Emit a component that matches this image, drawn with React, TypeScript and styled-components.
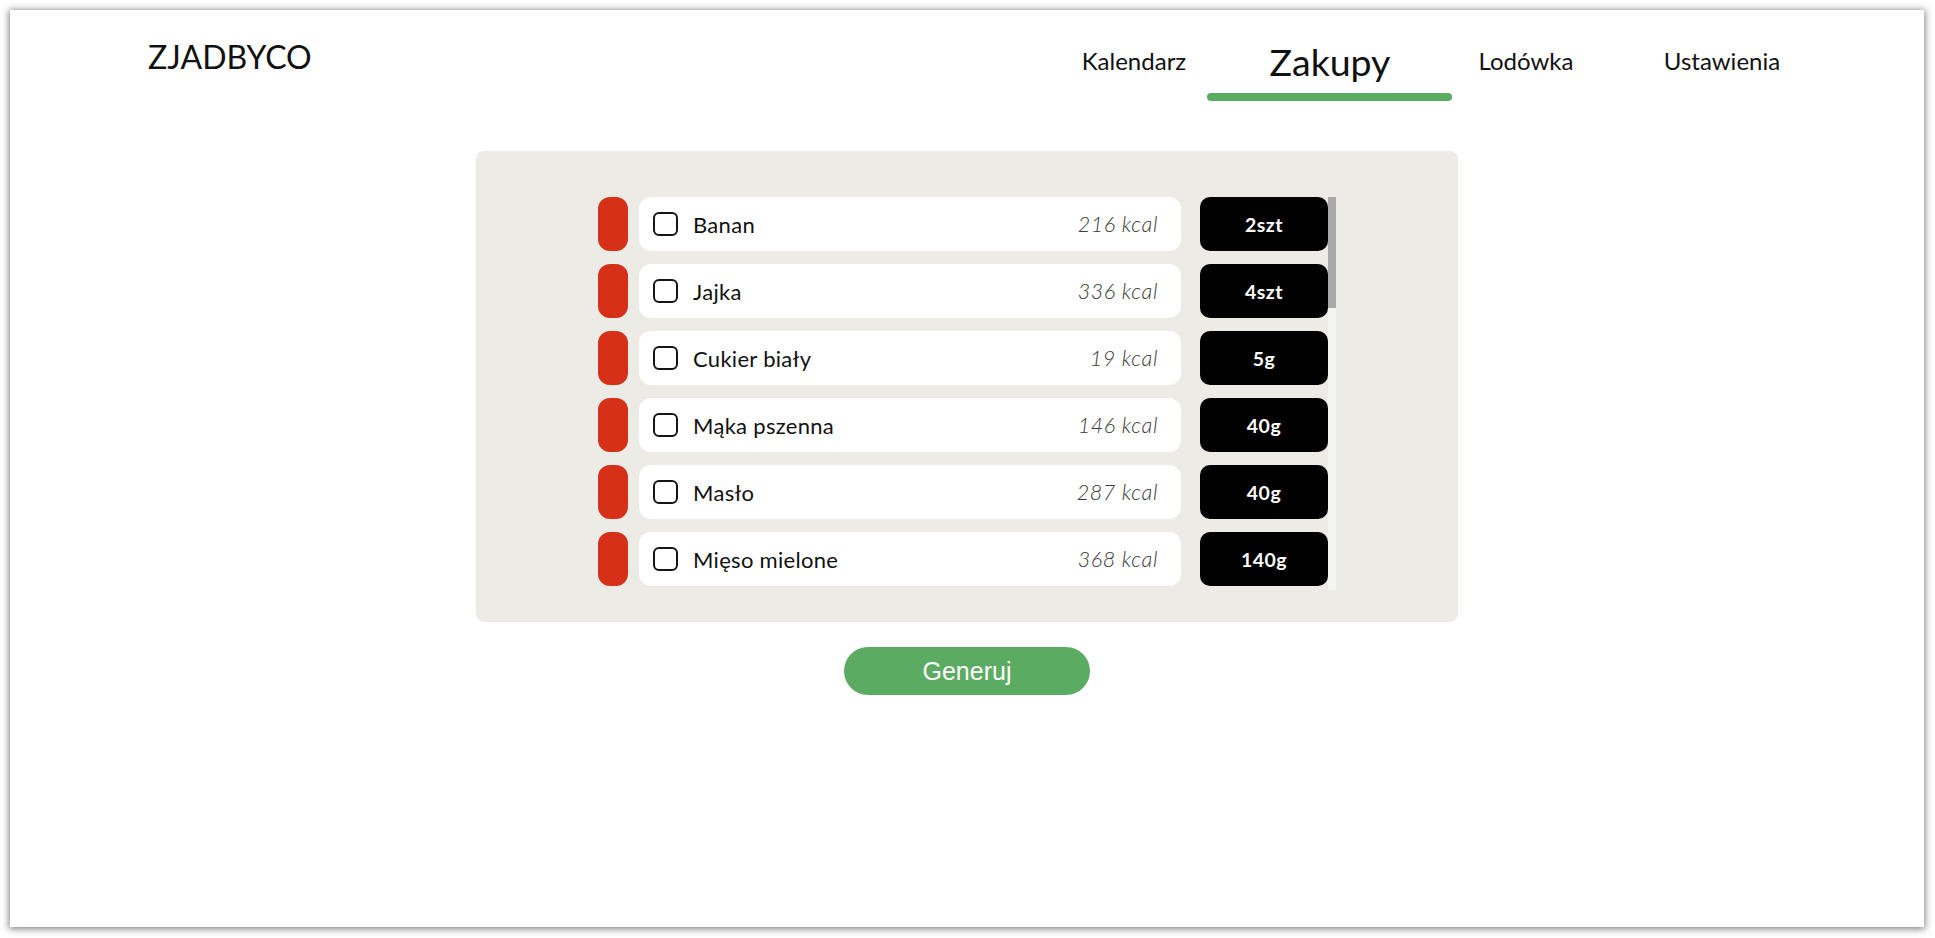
import React from "react";
import styled, { createGlobalStyle } from "styled-components";

const GlobalStyle = createGlobalStyle`
  html, body { margin: 0; padding: 0; background: #ffffff; }
  body { font-family: Lato, "Noto Sans", sans-serif; color: #111; }
  * { box-sizing: border-box; }
`;

const Frame = styled.div`
  margin: 10px 11px 11px 10px;
  height: 917px;
  background: #ffffff;
  box-shadow: 0 1px 7px 1px rgba(0, 0, 0, 0.5);
  display: flex;
  flex-direction: column;
`;

const Header = styled.header`
  display: flex;
  justify-content: space-between;
  align-items: flex-start;
  height: 141px;
  padding: 28px 104px 0 138px;
`;

const Logo = styled.div`
  font-family: Lato, sans-serif;
  font-size: 32px;
  line-height: 1.2;
  font-weight: 400;
  color: #111;
`;

const Nav = styled.nav`
  display: flex;
  margin-top: 1.5px;
`;

const NavItem = styled.a<{ $active?: boolean }>`
  position: relative;
  width: 196px;
  height: 44px;
  display: flex;
  align-items: center;
  justify-content: center;
  font-family: Lato, sans-serif;
  font-size: ${(p) => (p.$active ? "37.5px" : "24px")};
  line-height: 1.2;
  color: #111;
  text-decoration: none;
  cursor: pointer;

  &::after {
    content: "";
    display: ${(p) => (p.$active ? "block" : "none")};
    position: absolute;
    top: 53px;
    left: -25px;
    right: -24px;
    height: 8px;
    border-radius: 4px;
    background: #5cab63;
  }
`;

const Main = styled.main`
  display: flex;
  flex-direction: column;
  align-items: center;
`;

const Panel = styled.section`
  width: 982px;
  height: 471px;
  background: #ecebe6;
  border-radius: 8px;
  padding: 46px 122px 32px;
`;

const ListArea = styled.div`
  display: flex;
  height: 393px;
`;

const List = styled.ul`
  flex: 1;
  list-style: none;
  margin: 0;
  padding: 0;
  overflow: hidden;
  display: flex;
  flex-direction: column;
  gap: 13px;
`;

const ScrollTrack = styled.div`
  width: 8px;
  flex: none;
  background: #f4f4f3;
  display: flex;
  flex-direction: column;
`;

const ScrollThumb = styled.div`
  width: 100%;
  background: #a9a9a9;
`;

const Row = styled.li`
  display: flex;
  align-items: stretch;
  height: 54px;
  flex: 0 0 54px;
`;

const Tag = styled.div`
  width: 30px;
  border-radius: 12px;
  background: #d63019;
  margin-right: 11px;
`;

const Item = styled.label`
  flex: 1;
  display: flex;
  align-items: center;
  background: #ffffff;
  border-radius: 12px;
  padding: 0 23px 0 14px;
  margin-right: 19px;
  cursor: pointer;
`;

const Check = styled.input`
  appearance: none;
  -webkit-appearance: none;
  width: 25px;
  height: 24px;
  margin: 0 15px 0 0;
  border: 2px solid #151515;
  border-radius: 6px;
  background: #fff;
  flex: none;
`;

const Name = styled.span`
  flex: 1;
  font-family: Lato, sans-serif;
  font-size: 22px;
  font-weight: 400;
  color: #111;
  letter-spacing: 0.3px;
`;

const Kcal = styled.span`
  font-family: Lato, sans-serif;
  font-style: italic;
  font-weight: 300;
  font-size: 21.5px;
  letter-spacing: 0.6px;
  color: #3a3a3a;
`;

const Qty = styled.div`
  width: 128px;
  display: flex;
  align-items: center;
  justify-content: center;
  background: #000;
  color: #fff;
  border-radius: 10px;
  font-family: Lato, sans-serif;
  font-weight: 700;
  font-size: 19.5px;
  letter-spacing: 0.5px;
`;

const GenerateButton = styled.button`
  margin-top: 25px;
  width: 246px;
  height: 48px;
  border: none;
  border-radius: 24px;
  background: #5cab63;
  color: #fff;
  font-family: "Liberation Sans", Arial, sans-serif;
  font-size: 25px;
  cursor: pointer;
`;

const items: { name: string; kcal: number; qty: string }[] = [
  { name: "Banan", kcal: 216, qty: "2szt" },
  { name: "Jajka", kcal: 336, qty: "4szt" },
  { name: "Cukier biały", kcal: 19, qty: "5g" },
  { name: "Mąka pszenna", kcal: 146, qty: "40g" },
  { name: "Masło", kcal: 287, qty: "40g" },
  { name: "Mięso mielone", kcal: 368, qty: "140g" },
];

const navLinks = ["Kalendarz", "Zakupy", "Lodówka", "Ustawienia"];

const thumbRatio = 111 / 393;

export default function App() {
  return (
    <>
      <GlobalStyle />
      <Frame>
        <Header>
          <Logo>ZJADBYCO</Logo>
          <Nav>
            {navLinks.map((l) => (
              <NavItem key={l} $active={l === "Zakupy"}>
                {l}
              </NavItem>
            ))}
          </Nav>
        </Header>
        <Main>
          <Panel>
            <ListArea>
              <List>
                {items.map((it) => (
                  <Row key={it.name}>
                    <Tag />
                    <Item>
                      <Check type="checkbox" />
                      <Name>{it.name}</Name>
                      <Kcal>{it.kcal} kcal</Kcal>
                    </Item>
                    <Qty>{it.qty}</Qty>
                  </Row>
                ))}
              </List>
              <ScrollTrack>
                <ScrollThumb style={{ height: `${thumbRatio * 100}%` }} />
              </ScrollTrack>
            </ListArea>
          </Panel>
          <GenerateButton>Generuj</GenerateButton>
        </Main>
      </Frame>
    </>
  );
}
